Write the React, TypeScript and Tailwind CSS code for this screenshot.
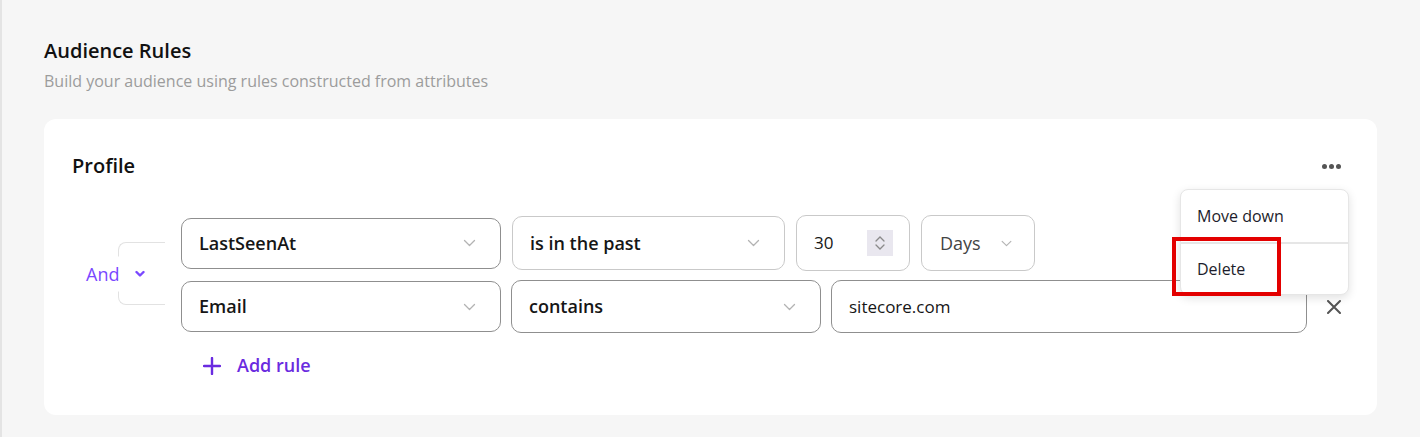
import React from "react";

const font = { fontFamily: '"Open Sans", "Noto Sans", sans-serif' };

function Chevron({ className = "" }: { className?: string }) {
	return (
		<svg viewBox="0 0 12 8" className={className} fill="none">
			<path d="M1 1.5l5 5 5-5" stroke="currentColor" strokeWidth="1.3" strokeLinecap="round" strokeLinejoin="round" />
		</svg>
	);
}

type SelectProps = {
	label: string;
	width: string;
	height: string;
	border: string;
	weight?: string;
	color?: string;
};

function SelectBox({ label, width, height, border, weight = "font-semibold", color = "text-[#161616]" }: SelectProps) {
	return (
		<div className={`flex items-center justify-between rounded-[10px] border bg-white pl-[17px] pr-[24px] ${width} ${height} ${border}`}>
			<span className={`text-[18px] ${weight} ${color}`}>{label}</span>
			<Chevron className="h-[8px] w-[13px] text-[#b3b3b3]" />
		</div>
	);
}

export default function App() {
	return (
		<div style={font} className="min-h-[437px] w-[1420px] border-l-2 border-[#e4e4e4] bg-[#f6f6f6] pl-[42px] pt-[37px]">
			<h1 className="text-[20px] font-semibold leading-[28px] text-[#111]">Audience Rules</h1>
			<p className="mt-[4px] text-[16px] leading-[24px] text-[#9c9c9c]">
				Build your audience using rules constructed from attributes
			</p>

			{/* rule group card */}
			<div className="relative mt-[26px] h-[296px] w-[1333px] rounded-xl bg-white pl-[28px] pt-[33px]">
				<div className="flex items-center justify-between pr-[36px]">
					<h2 className="text-[20px] font-semibold leading-[28px] text-[#111]">Profile</h2>
					<div className="flex gap-[2px]">
						<span className="h-[5px] w-[5px] rounded-full bg-[#555]" />
						<span className="h-[5px] w-[5px] rounded-full bg-[#555]" />
						<span className="h-[5px] w-[5px] rounded-full bg-[#555]" />
					</div>
				</div>

				<div className="mt-[35px] flex items-center">
					{/* and/or connector */}
					<div className="relative flex w-[109px] items-center">
						<div className="ml-[46px] mt-[-1px] h-[63px] w-[47px] rounded-l-lg border-y border-l border-[#e2e2e2]" />
						<div className="absolute left-[14px] top-1/2 flex -translate-y-1/2 items-center gap-[16px] bg-white py-[4px] pr-[4px]">
							<span className="text-[18px] font-medium text-[#7a48ff]">And</span>
							<svg viewBox="0 0 10 7" className="h-[7px] w-[10px] text-[#7a48ff]" fill="none">
								<path d="M1.5 1.5L5 5l3.5-3.5" stroke="currentColor" strokeWidth="2.4" strokeLinecap="round" strokeLinejoin="round" />
							</svg>
						</div>
					</div>

					<div className="flex flex-col">
						<div className="flex items-center gap-[11px]">
							<SelectBox label="LastSeenAt" width="w-[320px]" height="h-[51px]" border="border-[#8f8f8f]" />
							<SelectBox label="is in the past" width="w-[273px]" height="h-[54px]" border="border-[#c9c9c9]" />
							<div className="flex h-[56px] w-[114px] items-center justify-between rounded-[10px] border border-[#c9c9c9] bg-white pl-[17px] pr-[16px]">
								<span className="text-[17px] text-[#161616]">30</span>
								<div className="flex h-[26px] w-[26px] flex-col items-center justify-center gap-[2px] bg-[#e9e7ef]">
									<svg viewBox="0 0 10 6" className="h-[6px] w-[10px] text-[#8a8a8a]" fill="none">
										<path d="M1 5l4-4 4 4" stroke="currentColor" strokeWidth="1.3" strokeLinecap="round" />
									</svg>
									<svg viewBox="0 0 10 6" className="h-[6px] w-[10px] text-[#8a8a8a]" fill="none">
										<path d="M1 1l4 4 4-4" stroke="currentColor" strokeWidth="1.3" strokeLinecap="round" />
									</svg>
								</div>
							</div>
							<div className="flex h-[56px] w-[114px] items-center gap-[20px] rounded-[10px] border border-[#c9c9c9] bg-white pl-[18px]">
								<span className="text-[18px] font-medium text-[#444]">Days</span>
								<Chevron className="h-[7px] w-[11px] text-[#b3b3b3]" />
							</div>
						</div>

						<div className="mt-[9px] flex items-center gap-[10px]">
							<SelectBox label="Email" width="w-[320px]" height="h-[51px]" border="border-[#8f8f8f]" />
							<SelectBox label="contains" width="w-[310px]" height="h-[53px]" border="border-[#8f8f8f]" />
							<div className="flex h-[53px] w-[476px] items-center rounded-[10px] border border-[#8f8f8f] bg-white pl-[17px]">
								<span className="text-[17px] text-[#161616]">sitecore.com</span>
							</div>
							<svg viewBox="0 0 14 14" className="ml-[10px] h-[14px] w-[14px] text-[#555]" fill="none">
								<path d="M1 1l12 12M13 1L1 13" stroke="currentColor" strokeWidth="2" strokeLinecap="round" />
							</svg>
						</div>
					</div>
				</div>

				<button className="ml-[131px] mt-[19px] flex items-center gap-[16px] text-[#6a2be0]">
					<svg viewBox="0 0 18 18" className="h-[18px] w-[18px]" fill="none">
						<path d="M9 1v16M1 9h16" stroke="currentColor" strokeWidth="2.4" strokeLinecap="round" />
					</svg>
					<span className="text-[18px] font-semibold">Add rule</span>
				</button>

				{/* open actions menu */}
				<div className="absolute left-[1136px] top-[70px] w-[169px] overflow-hidden rounded-lg border border-[#e6e6e6] bg-white shadow-[0_3px_10px_rgba(0,0,0,0.12)]">
					<div className="flex h-[52px] items-center pl-[16px] text-[16px] text-[#1d1d2b]">Move down</div>
					<div className="h-[2px] bg-[#e6e6e6]" />
					<div className="flex h-[50px] items-center pl-[16px] text-[16px] text-[#1d1d2b]">Delete</div>
				</div>
				<div className="absolute left-[1128px] top-[118px] h-[59px] w-[109px] border-[4px] border-[#e30000]" />
			</div>
		</div>
	);
}
